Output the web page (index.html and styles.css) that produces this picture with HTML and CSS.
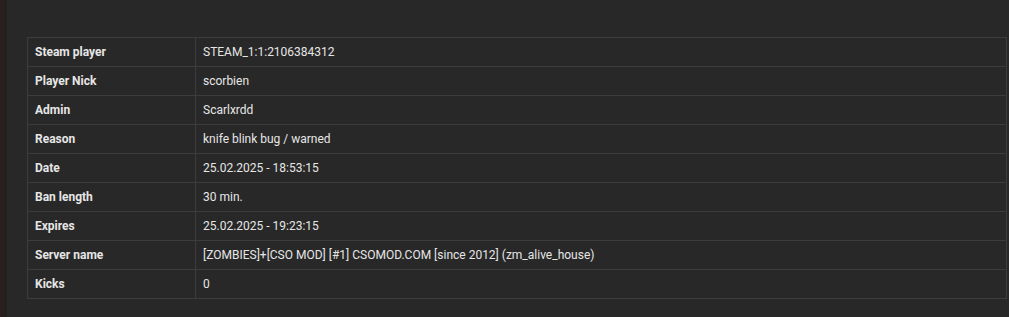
FILE: index.html
```html
<!DOCTYPE html>
<html>
<head>
<meta charset="utf-8">
<link rel="stylesheet" href="styles.css">
</head>
<body>
<div class="layout">
  <div class="edge"></div>
  <main class="main">
    <table class="info">
      <tbody>
        <tr><th>Steam player</th><td>STEAM_1:1:2106384312</td></tr>
        <tr><th>Player Nick</th><td>scorbien</td></tr>
        <tr><th>Admin</th><td>Scarlxrdd</td></tr>
        <tr><th>Reason</th><td>knife blink bug / warned</td></tr>
        <tr><th>Date</th><td>25.02.2025 - 18:53:15</td></tr>
        <tr><th>Ban length</th><td>30 min.</td></tr>
        <tr><th>Expires</th><td>25.02.2025 - 19:23:15</td></tr>
        <tr><th>Server name</th><td>[ZOMBIES]+[CSO MOD] [#1] CSOMOD.COM [since 2012] (zm_alive_house)</td></tr>
        <tr><th>Kicks</th><td>0</td></tr>
      </tbody>
    </table>
  </main>
</div>
</body>
</html>
```
FILE: styles.css
```css
html, body {
  margin: 0;
  padding: 0;
  background: #282828;
  height: 100%;
}
body {
  font-family: Roboto, "Liberation Sans", sans-serif;
  color: #e6e6e6;
  font-size: 12px;
}
.layout {
  display: flex;
  min-height: 100%;
}
.edge {
  width: 7px;
  flex: none;
  background: linear-gradient(to right, #2a1f1f, #231f1f);
}
.main {
  flex: 1;
  padding: 37px 2px 0 20px;
}
.info {
  width: 100%;
  border-collapse: collapse;
  border: 1px solid #3c3c3c;
}
.info th, .info td {
  border: 1px solid #3c3c3c;
  padding: 7px 7px 7px 7px;
  height: 14px;
  line-height: 14px;
  text-align: left;
  vertical-align: middle;
}
.info th {
  width: 153px;
  font-weight: 700;
}
.info td {
  font-weight: 400;
}
```
